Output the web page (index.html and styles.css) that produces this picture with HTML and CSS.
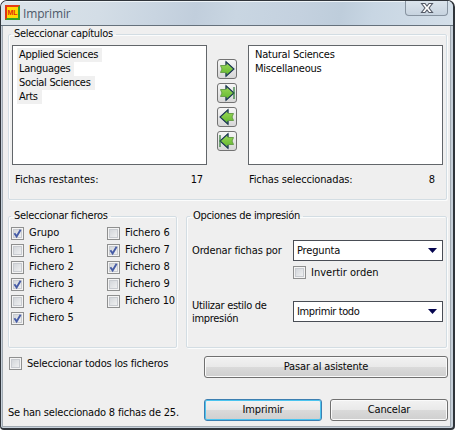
FILE: index.html
```html
<!DOCTYPE html>
<html lang="es">
<head>
<meta charset="utf-8">
<title>Imprimir</title>
<link rel="stylesheet" href="styles.css">
</head>
<body>
<svg class="defs" width="0" height="0">
  <defs>
    <linearGradient id="green" x1="0" y1="0" x2="0" y2="1"><stop offset="0" stop-color="#9edb5c"/><stop offset="1" stop-color="#5cb42a"/></linearGradient>
    <symbol id="arrow" viewBox="0 0 18 18">
      <path d="M2.5 5.5H8V1.8L16 9L8 16.2V12.5H2.5L4 9Z" fill="url(#green)" stroke="#6a9f4c" stroke-width="1"/>
      <path d="M8 5V1.8L16 9L8 16.2V13" fill="none" stroke="#1d355c" stroke-width="1.1"/>
    </symbol>
    <symbol id="check" viewBox="0 0 13 13"><path d="M3.4 6.3L5.6 9.4L9.6 2.8" fill="none" stroke="#465ca6" stroke-width="1.9"/></symbol>
  </defs>
</svg>
<main class="window">
  <header class="titlebar">
    <span class="logo">ML</span>
    <h1>Imprimir</h1>
    <button class="close" aria-label="Cerrar"><svg width="14" height="12" viewBox="0 0 14 12"><path d="M1.5 1.5H5L7 4L9 1.5H12.5L9 6L12.5 10.5H9L7 8L5 10.5H1.5L5 6Z" fill="#fff" stroke="#555b68" stroke-width="1.1"/></svg></button>
  </header>
  <div class="client">
    <fieldset class="chapters">
      <legend>Seleccionar capítulos</legend>
      <div class="lists">
        <ul class="list shaded"><li>Applied Sciences</li><li>Languages</li><li>Social Sciences</li><li>Arts</li></ul>
        <div class="movers">
          <button><svg width="18" height="18"><use href="#arrow"/></svg></button>
          <button><svg width="18" height="18"><use href="#arrow"/><path d="M16 3V15" stroke="#28772f" stroke-width="1.2"/></svg></button>
          <button class="back"><svg width="18" height="18"><use href="#arrow"/></svg></button>
          <button class="back"><svg width="18" height="18"><use href="#arrow"/><path d="M16 3V15" stroke="#28772f" stroke-width="1.2"/></svg></button>
        </div>
        <ul class="list"><li>Natural Sciences</li><li>Miscellaneous</li></ul>
      </div>
      <div class="counts">
        <p><span class="loose">Fichas restantes:</span><span>17</span></p>
        <p><span>Fichas seleccionadas:</span><span>8</span></p>
      </div>
    </fieldset>
    <div class="groups">
      <fieldset class="files">
        <legend>Seleccionar ficheros</legend>
        <div class="filecols">
          <div>
            <label><i class="box"><svg><use href="#check"/></svg></i>Grupo</label>
            <label><i class="box"></i>Fichero 1</label>
            <label><i class="box"></i>Fichero 2</label>
            <label><i class="box"><svg><use href="#check"/></svg></i>Fichero 3</label>
            <label><i class="box"></i>Fichero 4</label>
            <label><i class="box"><svg><use href="#check"/></svg></i>Fichero 5</label>
          </div>
          <div>
            <label><i class="box"></i>Fichero 6</label>
            <label><i class="box"><svg><use href="#check"/></svg></i>Fichero 7</label>
            <label><i class="box"><svg><use href="#check"/></svg></i>Fichero 8</label>
            <label><i class="box"></i>Fichero 9</label>
            <label><i class="box"></i>Fichero 10</label>
          </div>
        </div>
      </fieldset>
      <fieldset class="options">
        <legend>Opciones de impresión</legend>
        <div class="form">
          <span>Ordenar fichas por</span>
          <div class="combo">Pregunta<svg width="9" height="5"><path d="M0 0H9L4.5 5Z" fill="#05054f"/></svg></div>
          <label class="invert"><i class="box"></i>Invertir orden</label>
          <span class="style">Utilizar estilo de<br>impresión</span>
          <div class="combo tight">Imprimir todo<svg width="9" height="5"><path d="M0 0H9L4.5 5Z" fill="#05054f"/></svg></div>
        </div>
      </fieldset>
    </div>
    <div class="row assistant">
      <label><i class="box"></i>Seleccionar todos los ficheros</label>
      <button class="btn wide">Pasar al asistente</button>
    </div>
    <div class="row final">
      <p>Se han seleccionado 8 fichas de 25.</p>
      <button class="btn primary">Imprimir</button>
      <button class="btn">Cancelar</button>
    </div>
  </div>
</main>
</body>
</html>
```
FILE: styles.css
```css
* { box-sizing: border-box; margin: 0; padding: 0; }
body { width: 455px; height: 430px; overflow: hidden; background: #fff; font: 11px/14px "DejaVu Sans Condensed", "DejaVu Sans", sans-serif; font-stretch: condensed; letter-spacing: -.15px; color: #080808; white-space: nowrap; }
.defs { position: absolute; }
button { font: inherit; letter-spacing: inherit; color: inherit; }
.window { width: 455px; height: 430px; border: 1px solid #30353b; border-width: 1px 2px 2px 1px; border-radius: 7px 7px 4px 4px; background: #c6d0da; overflow: hidden; }
.titlebar { height: 25px; display: flex; align-items: flex-start; padding-left: 4px; background: linear-gradient(100deg, #dce4ea 0, #d3dde6 22%, #c9d5e1 34%, #c1cedc 43%, #c9d6e2 52%, #c4d1df 66%, #becddb 75%, #c8d6e3 82%, #d4dfe9 100%); border-top: 1px solid #edf3f7; border-bottom: 1px solid #65717c; }
.logo { width: 15px; height: 15px; margin-top: 3px; border: 2px solid; border-color: #e63b12 #35a12a #35a12a #dd3714; background: #ffd800; color: #e12810; font: bold 7px/11px "Liberation Sans", sans-serif; text-align: center; letter-spacing: 0; }
h1 { flex: 1; margin: 2px 0 0 3px; font: 12px/19px "Open Sans", sans-serif; color: #4d5969; letter-spacing: -.15px; }
.close { width: 43px; height: 16px; margin: -2px 5px 0 0; border: 1px solid #8793a0; border-top: 0; border-radius: 0 0 4px 4px; background: linear-gradient(#dce5ed, #c7d3df); display: flex; align-items: center; justify-content: center; }
.client { height: 401px; margin: 0 2px 0 1px; border: 1px solid #a1aab2; border-top: 0; background: #efefef; padding: 1px 1px 0 5px; }
fieldset { min-width: 0; border: 1px solid #d3dde3; border-radius: 2px; box-shadow: inset 1px 1px #fbfcfc, 1px 1px #fbfcfc; }
legend { margin-left: 0; padding: 0 3px; height: 14px; letter-spacing: -.3px; }
.chapters { width: 439px; height: 173px; padding: 4px 3px 0; }
.chapters legend { margin-left: -1px; }
.lists { display: flex; }
.list { width: 195px; flex: none; height: 120px; border: 1px solid #62666a; background: #fff; list-style: none; padding: 2px 0 0 4px; }
.list li { width: max-content; padding: 0 4px 0 2px; letter-spacing: -.22px; }
.shaded li { background: #f0f0f0; padding-left: 2px; letter-spacing: -.3px; }
.movers { width: 41px; padding: 14px 0 0 10px; display: flex; flex-direction: column; gap: 4px; }
.movers button { width: 20px; height: 20px; border: 1px solid #737373; border-radius: 3px; background: linear-gradient(#f6f6f6, #d7d7d7); }
.movers svg { display: block; }
.back svg { transform: scaleX(-1); }
.counts { display: flex; gap: 41px; margin-top: 8px; padding: 0 8px 0 3px; }
.counts p { flex: 1; display: flex; justify-content: space-between; }
.counts p:first-child { flex: 0 0 188px; }
.counts p:last-child { margin-left: 5px; }
.loose { letter-spacing: 0; }
.groups { display: flex; gap: 9px; margin-top: 9px; }
.files { width: 169px; flex: none; height: 139px; padding: 4px 0 0 2px; }
.filecols { display: flex; margin-top: -1px; }
.filecols > div { width: 96px; flex: none; }
.filecols > div:last-child { width: 70px; }
label { display: flex; align-items: center; }
.filecols label { height: 17px; padding-bottom: 4px; letter-spacing: 0; }
.filecols > div:last-child label:last-child { letter-spacing: -.1px; }
.filecols .box { margin-bottom: -1px; margin-top: 0; }
.box { width: 13px; height: 13px; flex: none; margin-right: 5px; border: 1px solid #8e8f8f; background: linear-gradient(135deg, #ccd0d5, #f6f6f6); box-shadow: inset 0 0 0 1px #f4f4f4, inset 0 0 0 2px #c8cbd0; }
.box svg { display: block; width: 13px; height: 13px; margin: -1px; }
.options { width: 261px; flex: none; height: 139px; padding: 17px 3px 0 5px; }
.options legend { margin-left: -2px; }
.form { display: grid; grid-template-columns: 101px 150px; grid-template-rows: 21px 5px 13px 22px 21px; align-items: center; }
.combo { height: 21px; border: 1px solid #494d55; background: #fff; padding: 0 5px 0 3px; display: flex; align-items: center; justify-content: space-between; }
.tight { letter-spacing: -.4px; }
.invert { grid-area: 3 / 2; letter-spacing: 0; }
.style { grid-row: 5; line-height: 13px; letter-spacing: -.3px; }
.style + .combo { grid-row: 5; }
.row { display: flex; }
.row label { width: 196px; height: 16px; padding-left: 1px; letter-spacing: -.2px; }
.row .box { margin-bottom: 1px; }
.assistant { margin-top: 8px; }
.btn { width: 118px; height: 22px; border: 1px solid #707070; border-radius: 3px; box-shadow: inset 0 0 0 1px #fafafa; background: linear-gradient(#f2f2f2 0, #e9e9e9 49%, #dadada 50%, #cfcfcf 100%); }
.wide { width: 244px; }
.final { margin-top: 21px; gap: 8px; }
.final p { width: 188px; padding-top: 7px; letter-spacing: -.2px; }
.primary { border-color: #3c7fb1; box-shadow: inset 0 0 0 1px #4bc4ef; }
```
